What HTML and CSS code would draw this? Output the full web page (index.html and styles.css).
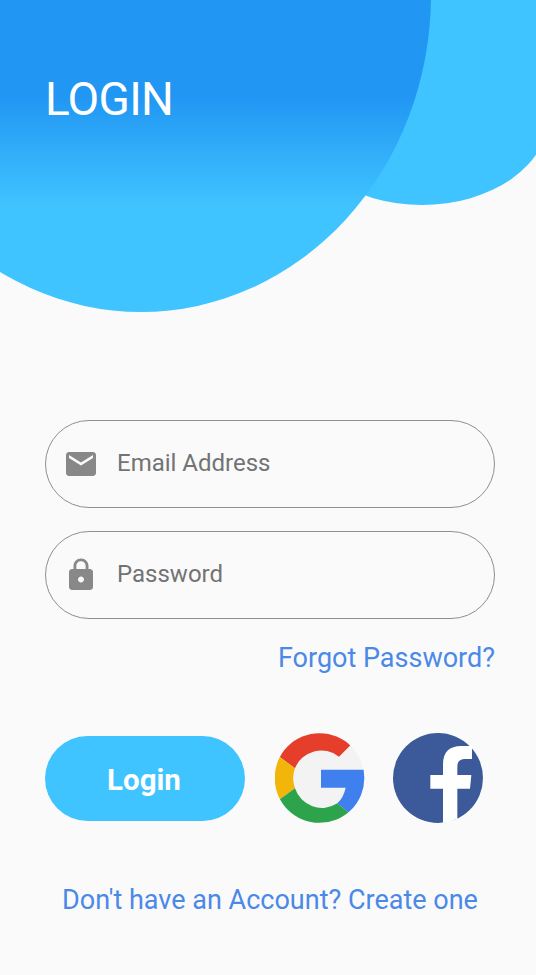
FILE: index.html
```html
<!DOCTYPE html>
<html lang="en">
<head>
<meta charset="utf-8">
<title>Login</title>
<link rel="stylesheet" href="styles.css">
</head>
<body>
<main class="screen">
  <header class="hero">
    <div class="bubble bubble-right"></div>
    <div class="bubble bubble-left"></div>
    <h1 class="title">LOGIN</h1>
  </header>
  <form class="form">
    <label class="field">
      <svg class="field-icon" viewBox="0 0 24 24"><path d="M20 4H4c-1.100 0-2 .9-2 2v12c0 1.100.9 2 2 2h16c1.100 0 2-.9 2-2V6c0-1.100-.9-2-2-2zm0 4l-8 5-8-5V6l8 5 8-5v2z"/></svg>
      <input class="input" type="email" placeholder="Email Address">
    </label>
    <label class="field">
      <svg class="field-icon" viewBox="0 0 24 24"><path d="M18 8h-1V6c0-2.760-2.240-5-5-5S7 3.240 7 6v2H6c-1.100 0-2 .9-2 2v10c0 1.100.9 2 2 2h12c1.100 0 2-.9 2-2V10c0-1.100-.9-2-2-2zm-6 9c-1.100 0-2-.9-2-2s.9-2 2-2 2 .9 2 2-.9 2-2 2zm3.100-9H8.900V6c0-1.710 1.390-3.100 3.100-3.100s3.100 1.390 3.100 3.100v2z"/></svg>
      <input class="input" type="password" placeholder="Password">
    </label>
    <a class="link forgot">Forgot Password?</a>
    <div class="actions">
      <button class="login" type="button">Login</button>
      <svg class="social google" viewBox="30 24 270 270">
        <clipPath id="disc"><circle cx="163.500" cy="159" r="134.500"/></clipPath>
        <g clip-path="url(#disc)">
          <rect x="30" y="24" width="270" height="270" fill="#f3f3f3"/>
          <path fill="#e53e2b" d="M15 74V0H317L222 95A85 85 0 0 0 90 130Z"/>
          <path fill="#f2b50a" d="M15 74V244L90 190A85 85 0 0 1 90 130Z"/>
          <path fill="#2da44c" d="M15 244V310H309L217 235A85 85 0 0 1 90 190Z"/>
          <path fill="#3f7fee" d="M168 134H310V311L217 235Q236 217 242 188H168Z"/>
        </g>
      </svg>
      <svg class="social facebook" viewBox="24 24 270 270">
        <circle cx="159" cy="159" r="135" fill="#3c5a9a"/>
        <path fill="#fff" d="M174 294V191H136V150H174V118Q174 63 229 63H261V102H241Q217 102 217 124V150H259L255 191H217V281Q196 291 174 294Z"/>
      </svg>
    </div>
    <a class="link signup">Don't have an Account? Create one</a>
  </form>
</main>
</body>
</html>
```
FILE: styles.css
```css
* { box-sizing: border-box; }
body { margin: 0; background: #fafafa; font-family: Roboto, sans-serif; }
.screen { width: 536px; height: 975px; overflow: hidden; }
.hero { position: relative; height: 420px; overflow: hidden; padding: 72px 0 0 45px; }
.bubble { position: absolute; }
.bubble-right { left: 295px; top: 0; width: 254px; height: 205px; background: #40c4ff; border-radius: 0 0 127px 127px / 0 0 90px 90px; }
.bubble-left { left: -149px; top: -322px; width: 580px; height: 634px; border-radius: 50%; background: linear-gradient(#2196f3 418px, #40c4ff 529px); }
.title { position: relative; margin: 0; font-size: 46px; letter-spacing: -0.700px; line-height: 54px; font-weight: 400; color: #fff; }
.form { display: flex; flex-direction: column; padding: 0 41px 0 45px; }
.field { display: flex; align-items: center; width: 450px; height: 88px; padding-left: 17px; border: 1px solid #8f8f8f; border-radius: 44px; margin-bottom: 23px; }
.field-icon { flex: none; width: 36px; height: 36px; margin-right: 18px; fill: #888; }
.input { width: 330px; padding: 0 0 3px; border: 0; outline: 0; background: transparent; font: 24px/30px Roboto, sans-serif; }
.input::placeholder { color: #737373; opacity: 1; }
.link { color: #4a89e8; font-size: 27px; line-height: 32px; white-space: nowrap; }
.forgot { align-self: flex-end; }
.actions { display: flex; align-items: center; height: 90px; margin-top: 59px; }
.login { width: 200px; height: 85px; margin-right: 30px; padding: 3px 2px 0 0; border: 0; border-radius: 43px; background: #40c4ff; color: #fff; font: 700 29.500px/34px Roboto, sans-serif; }
.social { flex: none; width: 90px; height: 90px; }
.google { margin-right: 28px; }
.signup { align-self: center; margin-top: 61px; }
```
